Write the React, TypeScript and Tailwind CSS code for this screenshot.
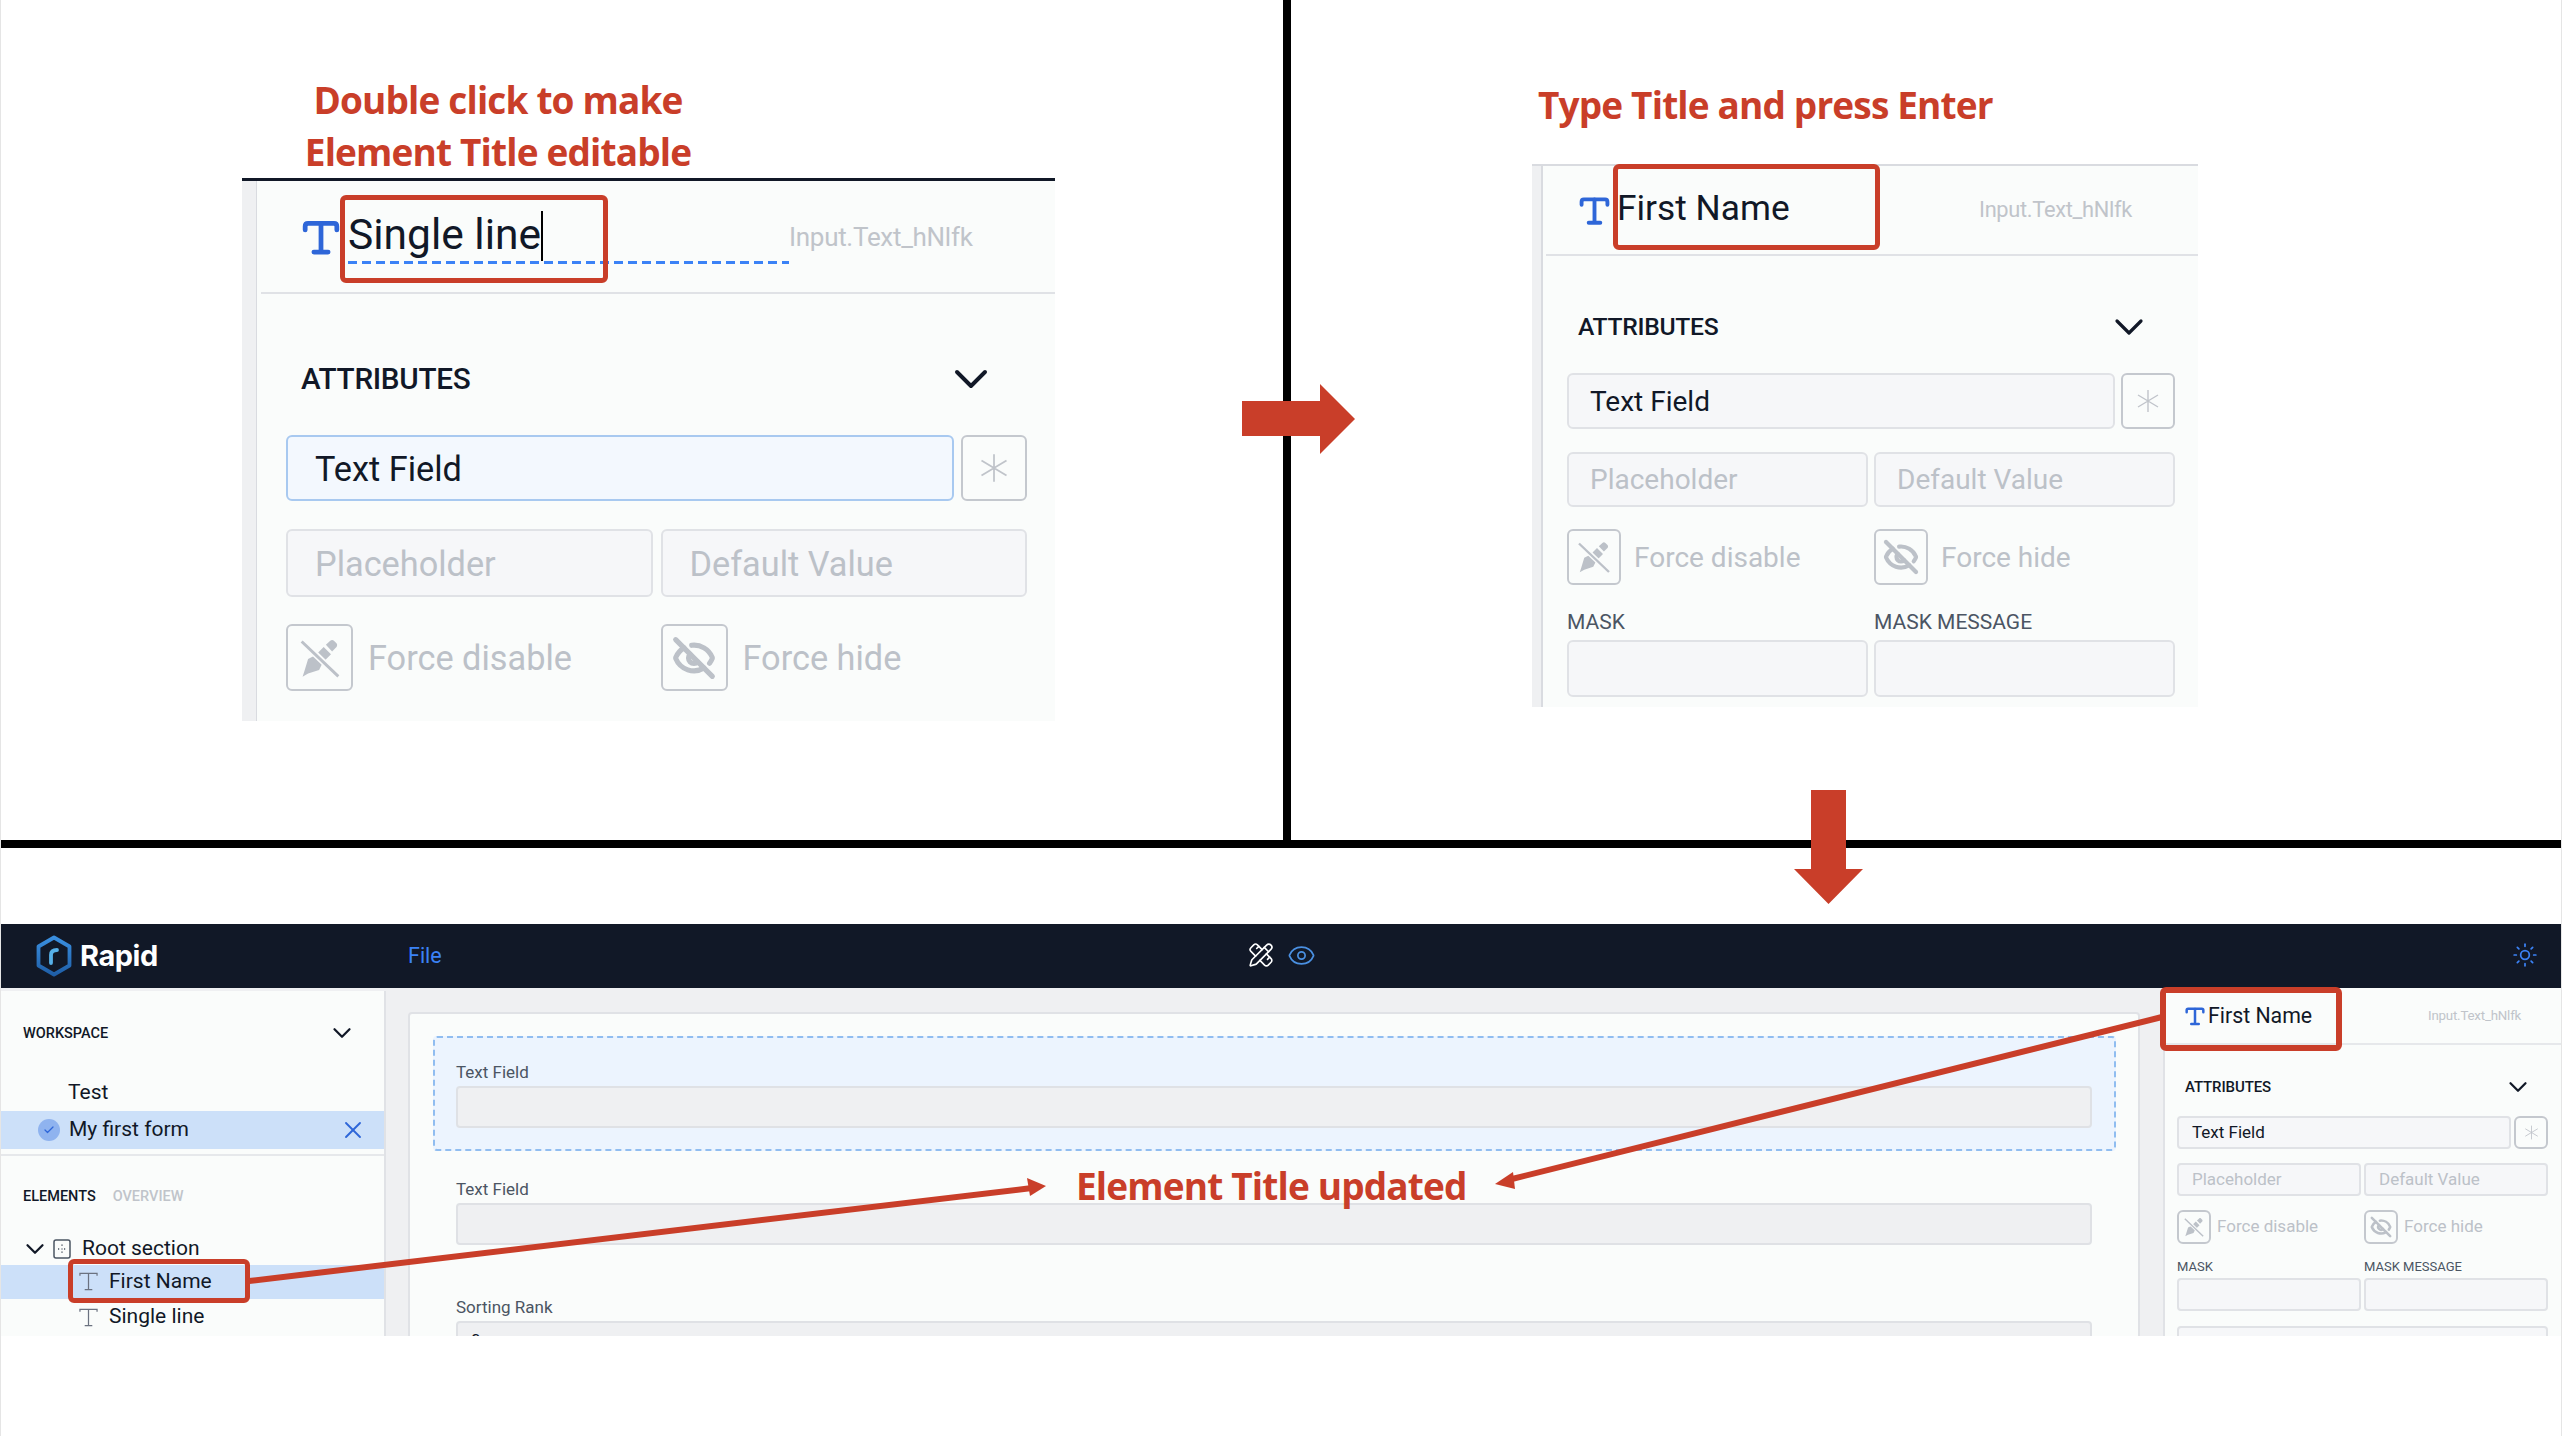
import { ChevronDown, Eye, EyeOff, PencilRuler, Sun, X, Check } from "lucide-react";
import type { ReactNode } from "react";

const font = { fontFamily: "Roboto, 'Liberation Sans', sans-serif" };

function SlabT({ className }: { className: string }) {
  return (
    <svg viewBox="0 0 24 24" className={className} fill="none" stroke="currentColor" strokeWidth="3" strokeLinecap="round">
      <path d="M2 7.5V5.2C2 4 2.8 3.4 3.8 3.4h16.4c1 0 1.8.6 1.8 1.8v2.3" />
      <path d="M12 3.5V21.5M7.5 21.5h9" />
    </svg>
  );
}

function ThinT({ className }: { className: string }) {
  return (
    <svg viewBox="0 0 20 20" className={className} fill="none" stroke="currentColor" strokeWidth="1.3">
      <path d="M1 4V1.5h18V4" />
      <path d="M10 1.5V18.5M6 18.5h8" />
    </svg>
  );
}

function StarIcon({ className }: { className: string }) {
  return (
    <svg viewBox="0 0 24 24" className={className} fill="none" stroke="currentColor" strokeWidth="1.4">
      <path d="M12 1v22M2 6l20 12M22 6 2 18" />
    </svg>
  );
}

function PenOffIcon({ className }: { className: string }) {
  return (
    <svg viewBox="0 0 24 24" className={className}>
      <path d="M15.2 4.8 17.6 2.6c.6-.5 1.4-.5 2 0l1.4 1.4c.5.6.5 1.4 0 2l-2.4 2.4zM14 6l4 4-3 3-4-4z" fill="currentColor" />
      <path d="M9.5 10.5 13.5 14.5 11.5 18.5 5.5 20.5 2.5 22.2 3.6 18.8 5.5 12.5z" fill="currentColor" />
      <path d="M2 3 22 22" stroke="#fbfcfc" strokeWidth="3.4" />
      <path d="M2 3 22 22" stroke="currentColor" strokeWidth="1.6" />
    </svg>
  );
}

type V = {
  root: string; strip: string; head: string; icon: string; title: string; titleText: string; code: string;
  attrRow: string; attr: string; chev: string; chevStroke: number; body: string; tf: string; star: string; starIcon: string;
  row2: string; input: string; btnRow: string; btnCell: string; btn: string; btnIcon: string; btnLabel: string;
  tfActive?: string;
};

const large: V = {
  root: "w-[813px] h-[543px] border-t-[3px] border-[#111827]",
  strip: "w-[15px] bg-[#eff0f2] border-r border-[#d9dbe0]",
  head: "ml-[4px] pl-[41px] h-[113px] border-b-2 border-[#e0e2e6]",
  icon: "w-[38px] h-[38px] ml-0 text-[#2e66d8]",
  title: "ml-[8px] w-[441px] self-start mt-[30px] h-[53px]",
  titleText: "text-[42.5px] leading-[48px] pb-[2px] inline-block border-r-2 border-black",
  code: "text-[26px] text-[#c0c4ca] tracking-[-0.3px] pt-[2px]",
  attrRow: "mt-[67px] h-[36px] mb-[38px] pl-[15px] pr-[42px]",
  attr: "text-[29.7px] font-medium tracking-[-0.3px]",
  chev: "w-[56px] h-[56px] -mr-[14px] -my-[10px]",
  chevStroke: 1.7,
  body: "w-[741px] ml-[29px]",
  tf: "h-[66px] flex-1 pl-[27px] pt-[3px] text-[34.3px] rounded-md border-2",
  star: "w-[66px] h-[66px] ml-[7px]",
  starIcon: "w-[30px] h-[30px]",
  row2: "mt-[28px] gap-[8px]",
  input: "h-[68px] pl-[27px] pt-[3px] text-[34.3px] rounded-md border-2",
  btnRow: "mt-[27px] gap-[8px]",
  btnCell: "gap-[15px]",
  btn: "w-[67px] h-[67px]",
  btnIcon: "w-[44px] h-[44px]",
  btnLabel: "text-[34.3px] pt-[3px]",
  tfActive: "bg-[#f3f8fe] border-[#a8c9f0]",
};

const medium: V = {
  root: "w-[666px] h-[543px] border-t-2 border-[#d9dbe0]",
  strip: "w-[11px] bg-[#eff0f2] border-r-2 border-[#d9dbe0]",
  head: "ml-[3px] pl-[33px] h-[90px] border-b-2 border-[#e0e2e6]",
  icon: "w-[31px] h-[31px] text-[#2e66d8]",
  title: "ml-[7px] w-[362px] pb-[4px]",
  titleText: "text-[35.3px] leading-[40px]",
  code: "text-[21.8px] text-[#c0c4ca] tracking-[-0.3px]",
  attrRow: "mt-[57px] h-[28px] mb-[32px] pl-[11px] pr-[34px]",
  attr: "text-[24.7px] font-medium tracking-[-0.3px]",
  chev: "w-[48px] h-[48px] -mr-[12px] -my-[10px]",
  chevStroke: 1.6,
  body: "w-[608px] ml-[24px]",
  tf: "h-[56px] flex-1 pl-[21px] pt-[1px] text-[28px] rounded-md border-2",
  star: "w-[54px] h-[56px] ml-[6px]",
  starIcon: "w-[24px] h-[24px]",
  row2: "mt-[23px] gap-[6px]",
  input: "h-[55px] pl-[21px] pt-[1px] text-[28px] rounded-md border-2",
  btnRow: "mt-[22px] gap-[6px]",
  btnCell: "gap-[13px]",
  btn: "w-[54px] h-[56px]",
  btnIcon: "w-[36px] h-[36px]",
  btnLabel: "text-[28px] pt-[1px]",
};

const small: V = {
  root: "w-[398px] h-[348px] border-l-2 border-[#e0e2e6]",
  strip: "hidden",
  head: "pl-[20px] h-[57px] border-b-2 border-[#e6e8eb]",
  icon: "w-[20px] h-[20px] text-[#2e66d8]",
  title: "ml-[3px] w-[220px]",
  titleText: "text-[21.3px] leading-[24px]",
  code: "text-[13.3px] text-[#c0c4ca] tracking-[-0.2px]",
  attrRow: "mt-[34px] h-[16px] mb-[21px] pl-[8px] pr-[23px]",
  attr: "text-[15px] font-medium tracking-[-0.1px]",
  chev: "w-[30px] h-[30px] -mr-[7.5px] -my-[7px]",
  chevStroke: 1.8,
  body: "w-[371px] ml-[12px]",
  tf: "h-[33px] flex-1 pl-[13px] text-[17px] rounded border-2",
  star: "w-[34px] h-[33px] ml-[3px]",
  starIcon: "w-[15px] h-[15px]",
  row2: "mt-[14px] gap-[3px]",
  input: "h-[33px] pl-[13px] text-[17px] rounded border-2",
  btnRow: "mt-[14px] gap-[3px]",
  btnCell: "gap-[6px]",
  btn: "w-[34px] h-[34px]",
  btnIcon: "w-[22px] h-[22px]",
  btnLabel: "text-[17px]",
};

function PropertyPanel({ v, name, editing, children }: { v: V; name: string; editing?: boolean; children?: ReactNode }) {
  return (
    <div className={`flex overflow-hidden bg-[#fafcfb] text-[#111827] shrink-0 ${v.root}`}>
      <div className={`shrink-0 ${v.strip}`} />
      <div className="flex-1 min-w-0">
        <div className={`flex items-center ${v.head}`}>
          <SlabT className={`shrink-0 ${v.icon}`} />
          <div className={`shrink-0 ${v.title}`}>
            <div className="flex">
              <span className={v.titleText}>{name}</span>
            </div>
            {editing && (
              <div className="h-[3px] bg-[repeating-linear-gradient(90deg,#3b82f6,#3b82f6_9px,transparent_9px,transparent_14px)]" />
            )}
          </div>
          <span className={v.code}>Input.Text_hNlfk</span>
        </div>
        <div className={v.body}>
          <div className={`flex items-center justify-between ${v.attrRow}`}>
            <span className={v.attr}>ATTRIBUTES</span>
            <ChevronDown className={v.chev} strokeWidth={v.chevStroke} />
          </div>
          <div className="flex">
            <div className={`flex items-center ${v.tf} ${v.tfActive ?? "bg-[#f6f7f9] border-[#e0e2e6]"}`}>Text Field</div>
            <div className={`flex items-center justify-center rounded-md border-2 border-[#c4c8ce] text-[#c0c4ca] shrink-0 ${v.star}`}>
              <StarIcon className={v.starIcon} />
            </div>
          </div>
          <div className={`grid grid-cols-2 ${v.row2}`}>
            <div className={`flex items-center bg-[#f6f7f9] border-[#e0e2e6] text-[#bcc1c8] ${v.input}`}>Placeholder</div>
            <div className={`flex items-center bg-[#f6f7f9] border-[#e0e2e6] text-[#bcc1c8] ${v.input}`}>Default Value</div>
          </div>
          <div className={`grid grid-cols-2 ${v.btnRow}`}>
            <div className={`flex items-center ${v.btnCell}`}>
              <div className={`flex items-center justify-center rounded-md border-2 border-[#c4c8ce] text-[#bcc1c8] shrink-0 ${v.btn}`}>
                <PenOffIcon className={v.btnIcon} />
              </div>
              <span className={`text-[#bcc1c8] ${v.btnLabel}`}>Force disable</span>
            </div>
            <div className={`flex items-center ${v.btnCell}`}>
              <div className={`flex items-center justify-center rounded-md border-2 border-[#c4c8ce] text-[#bcc1c8] shrink-0 ${v.btn}`}>
                <EyeOff className={v.btnIcon} strokeWidth={2.8} />
              </div>
              <span className={`text-[#bcc1c8] ${v.btnLabel}`}>Force hide</span>
            </div>
          </div>
          {children}
        </div>
      </div>
    </div>
  );
}

function Logo() {
  return (
    <svg viewBox="0 0 36 42" className="w-[36px] h-[42px] shrink-0" fill="none">
      <defs>
        <linearGradient id="hexStroke" x1="0" y1="0" x2="0" y2="1">
          <stop offset="0" stopColor="#3a8fe0" />
          <stop offset="1" stopColor="#1f5fa8" />
        </linearGradient>
      </defs>
      <path d="M18 2.5 33.5 11.5V30.5L18 39.5 2.5 30.5V11.5Z" stroke="url(#hexStroke)" strokeWidth="3.8" strokeLinejoin="round" />
      <path d="M15 28V20c0-3 2-5 6-5" stroke="#56b0e8" strokeWidth="3.8" strokeLinecap="round" />
    </svg>
  );
}

function AppFrame() {
  return (
    <div className="h-[412px] overflow-hidden flex flex-col bg-[#eff0f2] text-[#111827]">
      <div className="h-[64px] shrink-0 bg-[#111827] flex items-center pl-[35px] pr-[23px]">
        <Logo />
        <span className="ml-[8px] w-[328px] text-[29px] font-bold text-white tracking-[-0.5px]" style={{ fontFamily: "Inter, sans-serif" }}>Rapid</span>
        <span className="text-[21.5px] text-[#3b82f6]">File</span>
        <PencilRuler className="ml-[806px] mb-[2px] w-[26px] h-[26px] text-white" strokeWidth={1.5} />
        <Eye className="ml-[13px] mb-[2px] w-[29px] h-[29px] text-[#4a90e2]" strokeWidth={1.4} />
        <Sun className="ml-auto mb-[2px] w-[26px] h-[26px] text-[#3b82f6]" strokeWidth={1.6} />
      </div>
      <div className="flex flex-1 min-h-0">
        <div className="w-[385px] mt-[3px] shrink-0 bg-[#fafcfb] border-r-2 border-[#e0e2e6]">
          <div className="mt-[32px] h-[20px] flex items-center justify-between pl-[22px] pr-[35px]">
            <span className="text-[14.5px] font-medium pt-[1px]">WORKSPACE</span>
            <ChevronDown className="w-[30px] h-[30px] -mr-[8px] -my-[5px]" strokeWidth={1.8} />
          </div>
          <div className="h-[38px] mt-[30px] pl-[67px] pt-[1px] flex items-center text-[21px]">Test</div>
          <div className="h-[38px] pl-[37px] pr-[24px] pb-[1px] flex items-center bg-[#cce0f9] text-[21px]">
            <span className="w-[22px] h-[22px] rounded-full bg-[#8fb3ef] flex items-center justify-center">
              <Check className="w-[12px] h-[12px] text-[#2e66d8]" strokeWidth={2.5} />
            </span>
            <span className="ml-[9px] flex-1">My first form</span>
            <X className="w-[28px] h-[28px] -mr-[7px] text-[#2e66d8]" strokeWidth={1.6} />
          </div>
          <div className="mt-[5px] h-[2px] bg-[#e6e8eb]" />
          <div className="mt-[30px] h-[20px] flex items-center pl-[22px] pt-[1px] text-[14.5px] font-medium">
            <span>ELEMENTS</span>
            <span className="ml-[17px] text-[#c0c4ca]">OVERVIEW</span>
          </div>
          <div className="mt-[25px] h-[34px] pl-[19px] pt-[1px] flex items-center text-[21px]">
            <ChevronDown className="w-[30px] h-[30px] shrink-0" strokeWidth={1.8} />
            <svg viewBox="0 0 18 20" className="ml-[3px] w-[18px] h-[20px] shrink-0 text-[#4b5563]" fill="none" stroke="currentColor">
              <rect x="1" y="1" width="16" height="18" rx="2" strokeWidth="1.5" />
              <path d="M9 5.5v2M9 12.5v2M5 10h2M11 10h2M9 9.5v1" strokeWidth="1.4" strokeDasharray="1.2 1" />
            </svg>
            <span className="ml-[11px]">Root section</span>
          </div>
          <div className="h-[34px] pl-[78px] pb-[1px] flex items-center bg-[#cce0f9] text-[21px]">
            <ThinT className="w-[19px] h-[19px] text-[#6b7280] shrink-0" />
            <span className="ml-[11px]">First Name</span>
          </div>
          <div className="h-[36px] pl-[78px] flex items-center text-[21px]">
            <ThinT className="w-[19px] h-[19px] text-[#6b7280] shrink-0" />
            <span className="ml-[11px]">Single line</span>
          </div>
        </div>
        <div className="flex-1 min-w-0 pl-[22px] pr-[23px] pt-[24px]">
          <div className="h-[340px] bg-[#fafcfb] border-2 border-[#e0e2e6] rounded-t-sm pl-[23px] pt-[22px]">
            <div className="w-[1683px] h-[115px] bg-[#ecf4fe] border-2 border-dashed border-[#90bdf0] rounded-sm pl-[21px] pt-[24px]">
              <div className="h-[20px] pt-[1px] flex items-center text-[17px] text-[#4b5563]">Text Field</div>
              <div className="mt-[4px] w-[1636px] h-[42px] bg-[#eff0f2] border-2 border-[#dfe1e5] rounded" />
            </div>
            <div className="pl-[23px] mt-[28px]">
              <div className="h-[20px] pt-[1px] flex items-center text-[17px] text-[#4b5563]">Text Field</div>
              <div className="mt-[4px] w-[1636px] h-[42px] bg-[#eff0f2] border-2 border-[#dfe1e5] rounded" />
              <div className="mt-[52px] h-[20px] pt-[1px] flex items-center text-[17px] text-[#4b5563]">Sorting Rank</div>
              <div className="mt-[4px] w-[1636px] h-[42px] bg-[#eff0f2] border-2 border-[#dfe1e5] rounded pl-[13px] pt-[5px] text-[17px]">0</div>
            </div>
          </div>
        </div>
        <PropertyPanel v={small} name="First Name">
          <div className="grid grid-cols-2 gap-[3px] mt-[17px]">
            <div className="h-[12px] flex items-center text-[13px] text-[#4b5563]">MASK</div>
            <div className="h-[12px] flex items-center text-[13px] text-[#4b5563]">MASK MESSAGE</div>
          </div>
          <div className="grid grid-cols-2 gap-[3px] mt-[5px]">
            <div className="h-[33px] bg-[#f6f7f9] border-2 border-[#e0e2e6] rounded" />
            <div className="h-[33px] bg-[#f6f7f9] border-2 border-[#e0e2e6] rounded" />
          </div>
          <div className="mt-[15px] h-[33px] bg-[#f6f7f9] border-2 border-[#e0e2e6] rounded" />
        </PropertyPanel>
      </div>
    </div>
  );
}

const heading = { fontFamily: "'Open Sans', 'Liberation Sans', sans-serif" };

export default function App() {
  return (
    <div className="relative w-[2562px] h-[1436px] overflow-hidden bg-white border-x border-[#e5e5e5]" style={font}>
      <div className="flex h-[840px]">
        <div className="w-[1282px] shrink-0 pl-[241px] pt-[74px]">
          <div className="w-[512px] text-center text-[37px] leading-[52px] font-bold text-[#c93e29] tracking-[-0.85px]" style={heading}>
            <div>Double click to make</div>
            <div>Element Title editable</div>
          </div>
          <PropertyPanel v={large} name="Single line" editing />
        </div>
        <div className="w-[8px] shrink-0 bg-black" />
        <div className="flex-1 pl-[241px] pt-[79px]">
          <div className="pl-[6px] text-[37px] leading-[52px] font-bold text-[#c93e29] tracking-[-0.85px]" style={heading}>Type Title and press Enter</div>
          <div className="mt-[33px]">
            <PropertyPanel v={medium} name="First Name">
              <div className="grid grid-cols-2 gap-[6px] mt-[28px]">
                <div className="h-[20px] flex items-center text-[21px] text-[#4b5563]">MASK</div>
                <div className="h-[20px] flex items-center text-[21px] text-[#4b5563]">MASK MESSAGE</div>
              </div>
              <div className="grid grid-cols-2 gap-[6px] mt-[7px]">
                <div className="h-[57px] bg-[#f6f7f9] border-2 border-[#e0e2e6] rounded-md" />
                <div className="h-[57px] bg-[#f6f7f9] border-2 border-[#e0e2e6] rounded-md" />
              </div>
            </PropertyPanel>
          </div>
        </div>
      </div>
      <div className="h-[8px] bg-black" />
      <div className="h-[76px]" />
      <AppFrame />

      <svg className="absolute -left-px top-0 w-[2562px] h-[1436px] pointer-events-none" viewBox="0 0 2562 1436" fill="#c93e29">
        <polygon points="1242,401 1320,401 1320,384 1355,419 1320,454 1320,436 1242,436" />
        <polygon points="1811,790 1846,790 1846,869 1863,869 1828.5,904 1794,869 1811,869" />
        <line x1="249" y1="1281" x2="1032" y2="1188" stroke="#c93e29" strokeWidth="6" />
        <polygon points="1046,1186 1027,1178 1030,1196" />
        <line x1="2162" y1="1017" x2="1508" y2="1180" stroke="#c93e29" strokeWidth="6" />
        <polygon points="1495,1184 1513,1172 1515,1189" />
      </svg>
      <div className="absolute left-[339px] top-[195px] w-[268px] h-[88px] border-[5px] border-[#c93e29] rounded-md" />
      <div className="absolute left-[1612px] top-[164px] w-[267px] h-[86px] border-[5px] border-[#c93e29] rounded-md" />
      <div className="absolute left-[67px] top-[1259px] w-[182px] h-[44px] border-[5px] border-[#c93e29] rounded-md" />
      <div className="absolute left-[2159px] top-[987px] w-[182px] h-[64px] border-[6px] border-[#c93e29] rounded-md" />
      <div className="absolute left-[1075px] top-[1160px] text-[37px] leading-[52px] font-bold text-[#c93e29] tracking-[-0.85px]" style={heading}>Element Title updated</div>
    </div>
  );
}
